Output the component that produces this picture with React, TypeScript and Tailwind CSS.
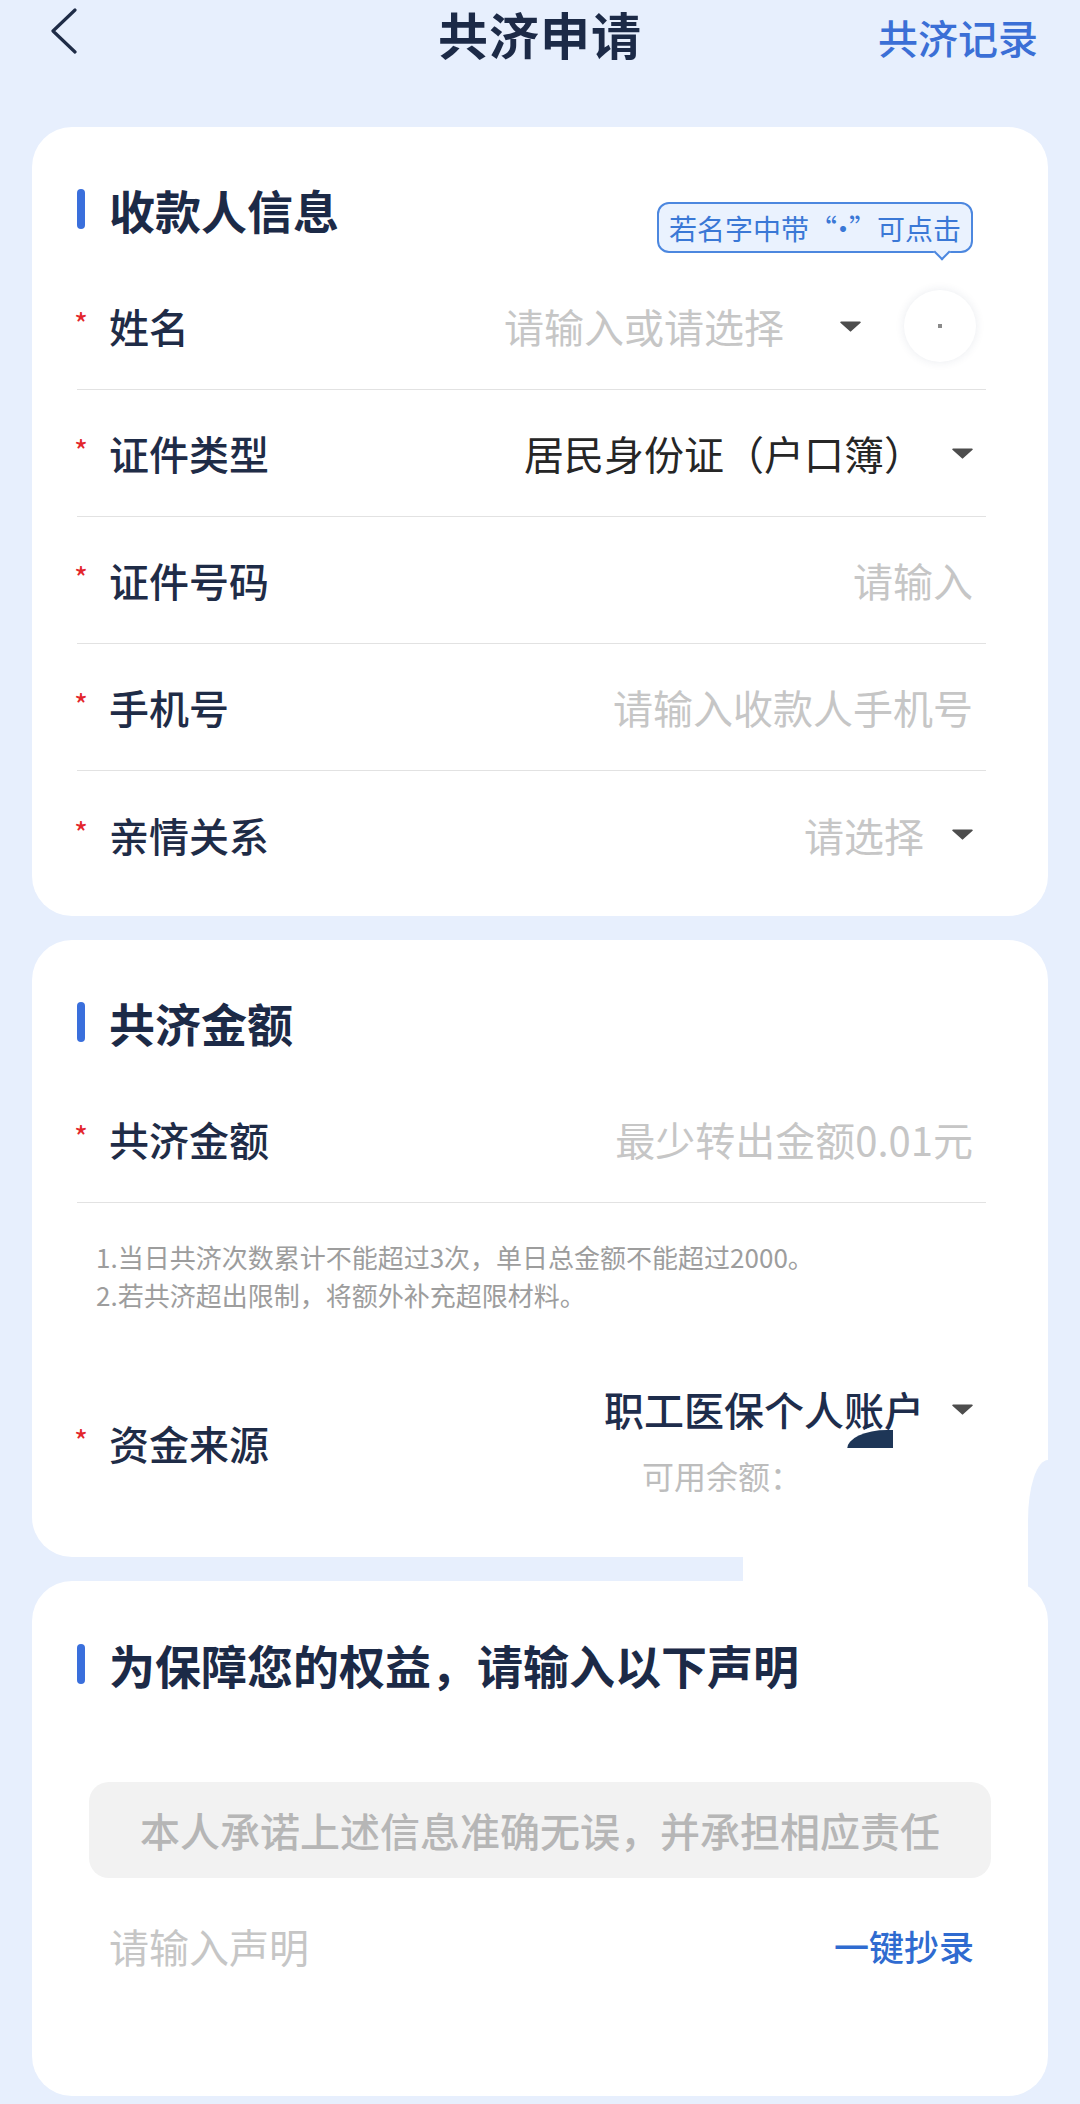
import React from "react";

const Triangle = () => (
  <svg width="21" height="11" viewBox="0 0 21 11" className="shrink-0">
    <path d="M1 0.5h19a0.8 0.8 0 0 1 0.6 1.3L11.1 10.3a0.8 0.8 0 0 1-1.2 0L0.4 1.8A0.8 0.8 0 0 1 1 0.5z" fill="#4d4d4d" />
  </svg>
);

const SectionTitle = ({ children }: { children: React.ReactNode }) => (
  <div className="flex items-center h-[56px]">
    <div className="w-[8px] h-[40px] rounded-full bg-[#3a6fdc]" />
    <div className="ml-[24px] text-[46px] leading-[56px] font-bold text-[#1c2a47]">{children}</div>
  </div>
);

const Label = ({ children }: { children: React.ReactNode }) => (
  <div className="flex items-start h-[56px]">
    <span className="-ml-[3px] w-[35px] text-[30px] leading-[30px] mt-[10px] text-[#e3262c]">*</span>
    <span className="text-[40px] leading-[56px] font-medium text-[#1f2c47]">{children}</span>
  </div>
);

const Row = ({
  label,
  children,
  last,
}: {
  label: string;
  children: React.ReactNode;
  last?: boolean;
}) => (
  <div
    className={
      last
        ? "flex items-center justify-between h-[127px]"
        : "flex items-center justify-between h-[127px] border-b border-[#e2e2e2]"
    }
  >
    <Label>{label}</Label>
    <div className="flex items-center pr-[13px]">{children}</div>
  </div>
);

export default function App() {
  return (
    <div className="relative w-[1080px] min-h-[2104px] bg-[#e7effd] font-['Noto_Sans_CJK_SC','Noto_Sans',sans-serif] overflow-hidden">
      {/* Header */}
      <div className="h-[127px] pt-[2px]">
        <div className="grid grid-cols-[1fr_auto_1fr] items-end h-[60px]">
          <div className="self-start pl-[49px] pt-[6px]">
            <svg width="30" height="46" viewBox="0 0 30 46" fill="none">
              <path d="M26 2 L4 23 L26 44" stroke="#1f2c47" strokeWidth="3.2" strokeLinecap="round" strokeLinejoin="round" />
            </svg>
          </div>
          <div className="text-[50px] leading-[58px] font-bold text-[#1c2a47] tracking-[1px]">共济申请</div>
          <div className="flex justify-end pr-[42px]">
            <span className="text-[40px] leading-[50px] font-medium text-[#3b6fd6]">共济记录</span>
          </div>
        </div>
      </div>

      <div className="flex flex-col gap-[24px] mx-[32px]">
        {/* Card 1 */}
        <div className="relative rounded-[40px] bg-white pt-[54px] pb-[18px] pl-[45px] pr-[62px]">
          <SectionTitle>收款人信息</SectionTitle>
          <div className="h-[26px]" />
          <Row label="姓名">
            <span className="text-[40px] leading-[56px] text-[#c6c6c6]">请输入或请选择</span>
            <div className="ml-[56px]">
              <Triangle />
            </div>
            <div className="ml-[43px] -mr-[3px] w-[72px] h-[72px] rounded-full bg-white shadow-[0_0_10px_rgba(40,60,100,0.10)] flex items-center justify-center">
              <div className="w-[4px] h-[4px] bg-[#8a8a8a]" />
            </div>
          </Row>
          <Row label="证件类型">
            <span className="text-[40px] leading-[56px] text-[#262626]">居民身份证（户口簿）</span>
            <div className="ml-[28px]">
              <Triangle />
            </div>
          </Row>
          <Row label="证件号码">
            <span className="text-[40px] leading-[56px] text-[#c6c6c6]">请输入</span>
          </Row>
          <Row label="手机号">
            <span className="text-[40px] leading-[56px] text-[#c6c6c6]">请输入收款人手机号</span>
          </Row>
          <Row label="亲情关系" last>
            <span className="text-[40px] leading-[56px] text-[#c6c6c6]">请选择</span>
            <div className="ml-[28px]">
              <Triangle />
            </div>
          </Row>

          {/* Tooltip */}
          <div className="absolute left-[625px] top-[75px] w-[316px] h-[51px] rounded-[12px] border-2 border-[#4c87df] bg-[#eaf2fe] flex items-center justify-center">
            <span className="text-[28px] leading-[34px] text-[#3a78d6]">
              若名字中带<span className="tracking-[-8px]">“·”</span>
              <span className="ml-[8px]">可点击</span>
            </span>
            <div className="absolute -bottom-[7px] left-[277px] w-[12px] h-[12px] rotate-45 bg-[#eaf2fe] border-r-2 border-b-2 border-[#4c87df]" />
          </div>
        </div>

        {/* Card 2 */}
        <div className="rounded-[40px] bg-white pt-[54px] pb-[62px] pl-[45px] pr-[62px]">
          <SectionTitle>共济金额</SectionTitle>
          <div className="h-[26px]" />
          <Row label="共济金额">
            <span className="text-[40px] leading-[56px] text-[#c6c6c6]">最少转出金额0.01元</span>
          </Row>
          <div className="pt-[35px] pl-[19px] text-[26px] leading-[38px] text-[#9d9d9d]">
            <div>1.当日共济次数累计不能超过3次，单日总金额不能超过2000。</div>
            <div>2.若共济超出限制，将额外补充超限材料。</div>
          </div>
          <div className="mt-[67px] flex items-start justify-between">
            <div className="mt-[34px]">
              <Label>资金来源</Label>
            </div>
            <div className="flex flex-col items-end pr-[13px]">
              <div className="flex items-center h-[56px]">
                <span className="text-[40px] leading-[56px] font-medium text-[#1e2d4c]">职工医保个人账户</span>
                <div className="ml-[28px]">
                  <Triangle />
                </div>
              </div>
              <div className="mt-[18px] h-[40px] w-[331px] text-[32px] leading-[40px] text-[#bdbdbd]">可用余额：3268.45元</div>
            </div>
          </div>
        </div>

        {/* Card 3 */}
        <div className="rounded-[40px] bg-white pt-[55px] pb-[122px] pl-[45px] pr-[62px]">
          <SectionTitle>为保障您的权益，请输入以下声明</SectionTitle>
          <div className="mt-[90px] ml-[12px] w-[902px] h-[96px] rounded-[20px] bg-[#f2f2f2] flex items-center justify-center">
            <span className="text-[40px] leading-[56px] font-medium text-[#b6b6b6]">本人承诺上述信息准确无误，并承担相应责任</span>
          </div>
          <div className="mt-[40px] flex items-center justify-between h-[56px] pl-[32px] pr-[12px]">
            <span className="text-[40px] leading-[56px] text-[#c6c6c6]">请输入声明</span>
            <span className="text-[35px] leading-[56px] font-medium text-[#2f6bd0]">一键抄录</span>
          </div>
        </div>
      </div>

      {/* Redaction artifacts lying over the content */}
      <div className="absolute left-[847px] top-[1430px] w-[46px] h-[19px] bg-[#1e3657] rounded-tl-[40px_19px]" />
      <div className="absolute left-[787px] top-[1448px] w-[241px] h-[60px] bg-white" />
      <div className="absolute left-[743px] top-[1500px] w-[285px] h-[95px] bg-white" />
      <div className="absolute left-[1028px] top-[1460px] w-[24px] h-[124px] bg-[#e7effd] rounded-tl-[20px_60px]" />
    </div>
  );
}
